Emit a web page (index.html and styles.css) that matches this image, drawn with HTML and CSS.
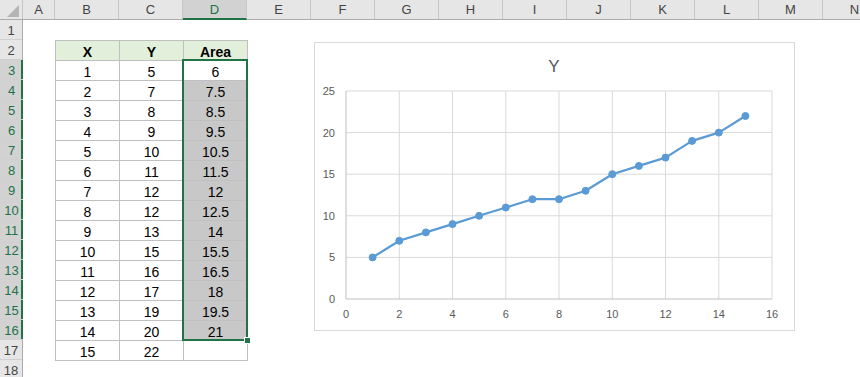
FILE: index.html
```html
<!DOCTYPE html>
<html>
<head>
  <link rel="stylesheet" href="styles.css">
</head>
<body>
  <div class="workbook">
    <div class="colheads">
      <div class="corner">
        <svg width="23" height="20" viewBox="0 0 23 20"><polygon points="19,5 19,17 7,17" fill="#b4b4b4"/></svg>
      </div>
      <div class="colhead narrow">A</div>
      <div class="colhead">B</div>
      <div class="colhead">C</div>
      <div class="colhead active">D</div>
      <div class="colhead">E</div>
      <div class="colhead">F</div>
      <div class="colhead">G</div>
      <div class="colhead">H</div>
      <div class="colhead">I</div>
      <div class="colhead">J</div>
      <div class="colhead">K</div>
      <div class="colhead">L</div>
      <div class="colhead">M</div>
      <div class="colhead">N</div>
    </div>

    <div class="main">
      <div class="rowheads">
        <div class="rowhead">1</div>
        <div class="rowhead">2</div>
        <div class="rowhead active">3</div>
        <div class="rowhead active">4</div>
        <div class="rowhead active">5</div>
        <div class="rowhead active">6</div>
        <div class="rowhead active">7</div>
        <div class="rowhead active">8</div>
        <div class="rowhead active">9</div>
        <div class="rowhead active">10</div>
        <div class="rowhead active">11</div>
        <div class="rowhead active">12</div>
        <div class="rowhead active">13</div>
        <div class="rowhead active">14</div>
        <div class="rowhead active">15</div>
        <div class="rowhead active">16</div>
        <div class="rowhead">17</div>
        <div class="rowhead">18</div>
      </div>

      <div class="sheet">
        <table class="data">
          <tr class="head"><th>X</th><th>Y</th><th>Area</th></tr>
          <tr><td>1</td><td>5</td><td class="area first">6</td></tr>
          <tr><td>2</td><td>7</td><td class="area sel">7.5</td></tr>
          <tr><td>3</td><td>8</td><td class="area sel">8.5</td></tr>
          <tr><td>4</td><td>9</td><td class="area sel">9.5</td></tr>
          <tr><td>5</td><td>10</td><td class="area sel">10.5</td></tr>
          <tr><td>6</td><td>11</td><td class="area sel">11.5</td></tr>
          <tr><td>7</td><td>12</td><td class="area sel">12</td></tr>
          <tr><td>8</td><td>12</td><td class="area sel">12.5</td></tr>
          <tr><td>9</td><td>13</td><td class="area sel">14</td></tr>
          <tr><td>10</td><td>15</td><td class="area sel">15.5</td></tr>
          <tr><td>11</td><td>16</td><td class="area sel">16.5</td></tr>
          <tr><td>12</td><td>17</td><td class="area sel">18</td></tr>
          <tr><td>13</td><td>19</td><td class="area sel">19.5</td></tr>
          <tr><td>14</td><td>20</td><td class="area sel">21</td></tr>
          <tr><td>15</td><td>22</td><td></td></tr>
        </table>

        <div class="selection"><span class="handle"></span></div>

        <div class="chart">
          <svg width="481" height="289" viewBox="0 0 481 289">
            <text x="240" y="30" class="title" text-anchor="middle">Y</text>
            <g class="grid">
              <line x1="32" y1="49" x2="458" y2="49"/>
              <line x1="32" y1="90.6" x2="458" y2="90.6"/>
              <line x1="32" y1="132.2" x2="458" y2="132.2"/>
              <line x1="32" y1="173.8" x2="458" y2="173.8"/>
              <line x1="32" y1="215.4" x2="458" y2="215.4"/>
              <line x1="85.3" y1="49" x2="85.3" y2="257"/>
              <line x1="138.5" y1="49" x2="138.5" y2="257"/>
              <line x1="191.8" y1="49" x2="191.8" y2="257"/>
              <line x1="245" y1="49" x2="245" y2="257"/>
              <line x1="298.3" y1="49" x2="298.3" y2="257"/>
              <line x1="351.5" y1="49" x2="351.5" y2="257"/>
              <line x1="404.8" y1="49" x2="404.8" y2="257"/>
              <line x1="458" y1="49" x2="458" y2="257"/>
            </g>
            <g class="axis">
              <line x1="32" y1="49" x2="32" y2="257"/>
              <line x1="32" y1="257" x2="458" y2="257"/>
            </g>
            <g class="ylabels" text-anchor="end">
              <text x="21" y="53">25</text>
              <text x="21" y="95">20</text>
              <text x="21" y="136">15</text>
              <text x="21" y="178">10</text>
              <text x="21" y="219">5</text>
              <text x="21" y="261">0</text>
            </g>
            <g class="xlabels" text-anchor="middle">
              <text x="32" y="276">0</text>
              <text x="85.3" y="276">2</text>
              <text x="138.5" y="276">4</text>
              <text x="191.8" y="276">6</text>
              <text x="245" y="276">8</text>
              <text x="298.3" y="276">10</text>
              <text x="351.5" y="276">12</text>
              <text x="404.8" y="276">14</text>
              <text x="458" y="276">16</text>
            </g>
            <polyline class="series" points="58.6,215.4 85.3,198.8 111.9,190.4 138.5,182.1 165.1,173.8 191.8,165.5 218.4,157.2 245,157.2 271.6,148.8 298.3,132.2 324.9,123.9 351.5,115.6 378.1,98.9 404.8,90.6 431.4,73.96"/>
            <g class="markers">
              <circle cx="58.6" cy="215.4" r="3.5"/>
              <circle cx="85.3" cy="198.8" r="3.5"/>
              <circle cx="111.9" cy="190.4" r="3.5"/>
              <circle cx="138.5" cy="182.1" r="3.5"/>
              <circle cx="165.1" cy="173.8" r="3.5"/>
              <circle cx="191.8" cy="165.5" r="3.5"/>
              <circle cx="218.4" cy="157.2" r="3.5"/>
              <circle cx="245" cy="157.2" r="3.5"/>
              <circle cx="271.6" cy="148.8" r="3.5"/>
              <circle cx="298.3" cy="132.2" r="3.5"/>
              <circle cx="324.9" cy="123.9" r="3.5"/>
              <circle cx="351.5" cy="115.6" r="3.5"/>
              <circle cx="378.1" cy="98.9" r="3.5"/>
              <circle cx="404.8" cy="90.6" r="3.5"/>
              <circle cx="431.4" cy="74" r="3.5"/>
            </g>
          </svg>
        </div>
      </div>
    </div>
  </div>
</body>
</html>
```

FILE: styles.css
```css
body {
  margin: 0;
  background-color: #fff;
  font-family: "Liberation Sans", Arial, sans-serif;
  overflow: hidden;
}

.workbook {
  width: 860px;
  height: 377px;
  overflow: hidden;
}

.colheads {
  display: flex;
  height: 20px;
  background-color: #e6e6e6;
  border-bottom: 1px solid #ababab;
  box-sizing: border-box;
}

.corner {
  width: 23px;
  flex: none;
  border-right: 1px solid #c6c6c6;
  box-sizing: border-box;
}

.corner svg {
  display: block;
}

.colhead {
  width: 64px;
  flex: none;
  font-size: 13px;
  color: #444;
  text-align: center;
  line-height: 20px;
  border-right: 1px solid #c6c6c6;
  box-sizing: border-box;
}

.colhead.narrow {
  width: 32px;
}

.colhead.active {
  background-color: #d2d2d2;
  color: #217346;
  border-bottom: 2px solid #217346;
  line-height: 19px;
  margin-bottom: -1px;
}

.main {
  display: flex;
}

.rowheads {
  width: 23px;
  flex: none;
  background-color: #e6e6e6;
  border-right: 1px solid #ababab;
  box-sizing: border-box;
}

.rowhead {
  height: 20px;
  font-size: 13px;
  color: #444;
  text-align: center;
  line-height: 21px;
  border-bottom: 1px solid #d0d0d0;
  box-sizing: border-box;
}

.rowhead.active {
  background-color: #d2d2d2;
  color: #217346;
  box-shadow: inset -2px 0 0 #217346;
  margin-right: -1px;
}

.sheet {
  position: relative;
  flex: 1;
  padding: 20px 0 0 32px;
}

.data {
  border-collapse: collapse;
  font-size: 14px;
  color: #000;
}

.data th,
.data td {
  width: 63px;
  height: 16px;
  padding: 3px 0 0;
  border: 1px solid #c0c0c0;
  text-align: center;
  line-height: 16px;
}

.data tr.head th {
  background-color: #e2efda;
  font-weight: bold;
}

.data td.sel {
  background-color: #c8c8c8;
}

.selection {
  position: absolute;
  left: 159px;
  top: 39px;
  width: 62px;
  height: 278px;
  border: 2px solid #217346;
  pointer-events: none;
}

.handle {
  position: absolute;
  right: -5px;
  bottom: -5px;
  width: 5px;
  height: 5px;
  background-color: #217346;
  border: 1px solid #fff;
}

.chart {
  position: absolute;
  left: 291px;
  top: 22px;
  width: 481px;
  height: 289px;
  box-sizing: border-box;
  border: 1px solid #d9d9d9;
  background-color: #fff;
}

.chart svg {
  display: block;
  margin: -1px;
}

.chart text {
  font-family: "Liberation Sans", Arial, sans-serif;
  fill: #595959;
  font-size: 11px;
}

.chart .title {
  font-size: 17px;
}

.grid line {
  stroke: #d9d9d9;
  stroke-width: 1;
}

.axis line {
  stroke: #bfbfbf;
  stroke-width: 1;
}

.series {
  fill: none;
  stroke: #5b9bd5;
  stroke-width: 2.25;
  stroke-linejoin: round;
}

.markers circle {
  fill: #5b9bd5;
  stroke: #5b9bd5;
}
```
